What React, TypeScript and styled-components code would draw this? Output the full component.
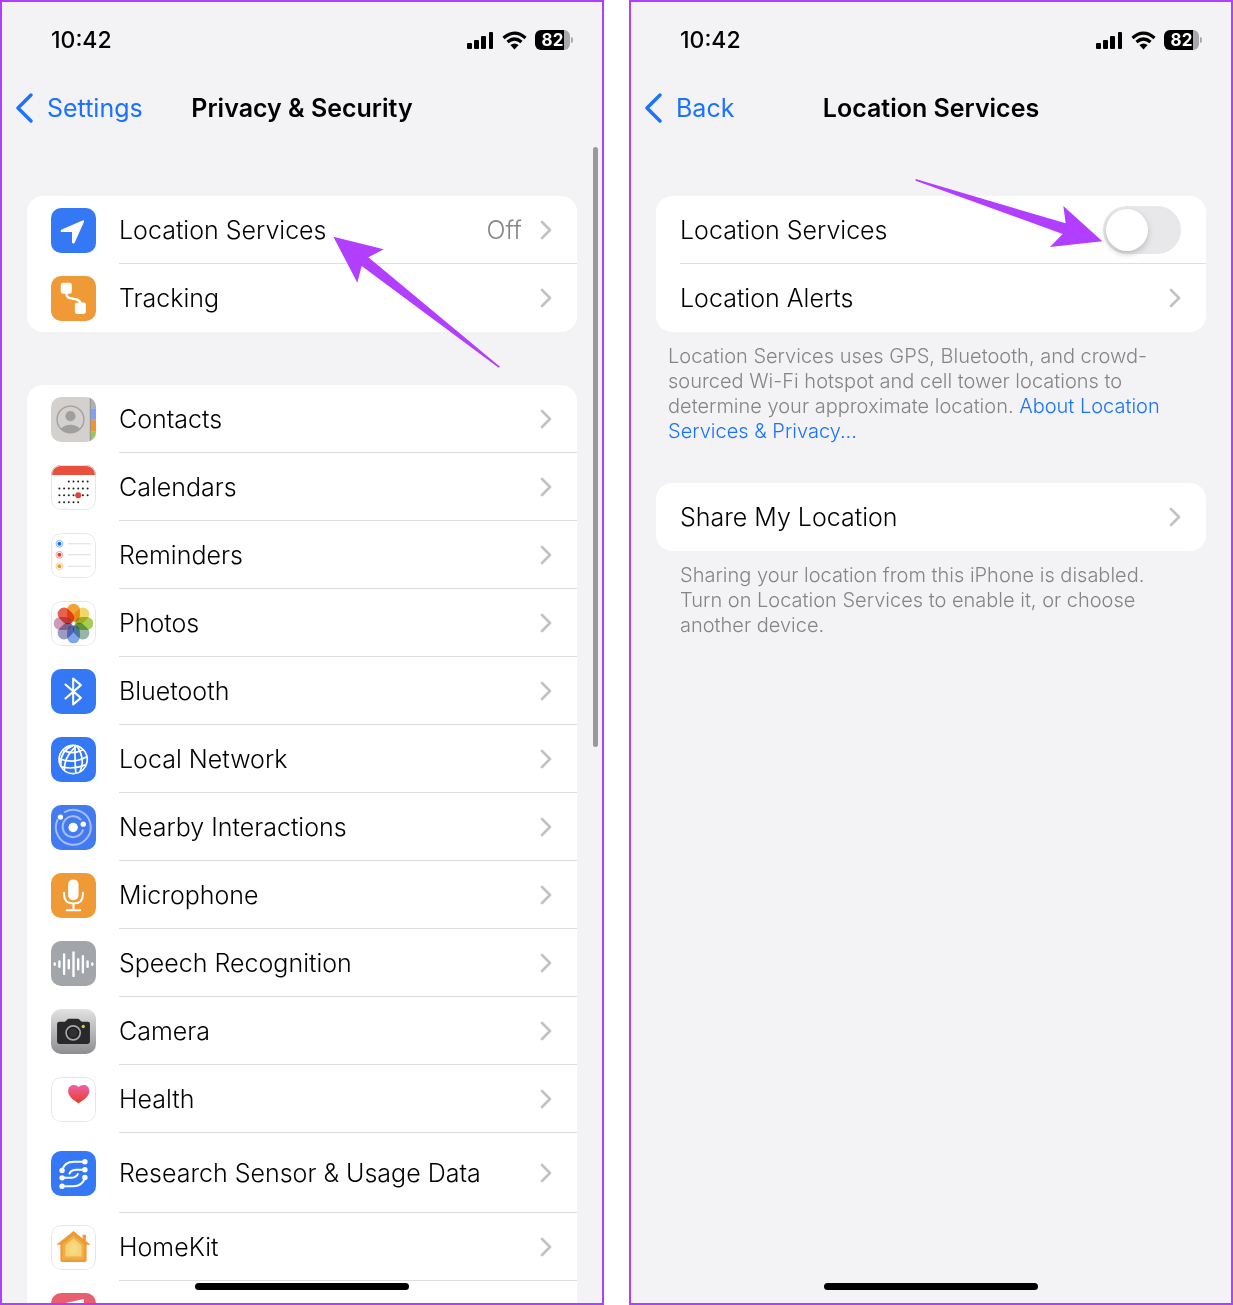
import React, { useState } from "react";
import styled, { createGlobalStyle } from "styled-components";

const GlobalStyle = createGlobalStyle`
  *, *::before, *::after { box-sizing: border-box; }
  body {
    margin: 0;
    background: #fff;
    color: #000;
    font-family: Inter, "Liberation Sans", sans-serif;
  }
  button { font: inherit; color: inherit; background: none; border: 0; padding: 0; text-align: left; cursor: pointer; }
`;

const Page = styled.main`
  display: grid;
  grid-template-columns: 1fr 1fr;
  gap: 25px;
  height: 100vh;
`;

const Phone = styled.section`
  position: relative;
  overflow: hidden;
  border: 2px solid #b23fff;
  background: #f3f3f5;
`;

const StatusBar = styled.div`
  display: flex;
  align-items: center;
  justify-content: space-between;
  height: 76px;
  padding: 0 29px 0 49px;
`;

const Time = styled.time`
  font-size: 23px;
  font-weight: 500;
`;

const StatusIcons = styled.div`
  display: flex;
  align-items: center;
  gap: 8px;
`;

const Battery = styled.span`
  display: flex;
  align-items: center;
  gap: 1px;

  &::after {
    content: "";
    width: 2px;
    height: 6px;
    border-radius: 0 2px 2px 0;
    background: #a9a9ad;
  }
`;

const BatteryLevel = styled.span`
  width: 35px;
  height: 20px;
  border-radius: 6px;
  background: linear-gradient(to right, #000 82%, #a9a9ad 82%);
  color: #fff;
  font-size: 17px;
  font-weight: 700;
  line-height: 20px;
  text-align: center;
`;

const NavBar = styled.header`
  display: grid;
  grid-template-columns: 1fr auto 1fr;
  align-items: center;
  height: 60px;
  padding: 0 12px;
`;

const BackButton = styled.button`
  display: flex;
  align-items: center;
  gap: 13px;
  justify-self: start;
  color: #1a72ff;
  font-size: 25px;
`;

const Title = styled.h1`
  margin: 0;
  font-size: 25px;
  font-weight: 600;
`;

const Content = styled.div`
  padding: 58px 25px 0;
`;

const Card = styled.ul<{ $spaceAbove?: number }>`
  margin: ${(p) => p.$spaceAbove ?? 0}px 0 0;
  padding: 0;
  list-style: none;
  overflow: hidden;
  border-radius: 16px;
  background: #fff;
`;

const RowItem = styled.li`
  &:last-child > * > span:last-child { border-bottom-color: transparent; }
`;

const RowButton = styled.button<{ $tall?: boolean }>`
  display: flex;
  align-items: center;
  gap: 23px;
  width: 100%;
  height: ${(p) => (p.$tall ? 80 : 68)}px;
  padding-left: 24px;
`;

const RowBody = styled.span`
  flex: 1;
  align-self: stretch;
  display: flex;
  align-items: center;
  gap: 18px;
  padding-right: 25px;
  border-bottom: 1px solid #dedee1;
  font-size: 25px;
  font-weight: 350;
`;

const RowLabel = styled.span`
  flex: 1;
  white-space: nowrap;
`;

const RowValue = styled.span`
  color: #858589;
`;

const Switch = styled.input`
  appearance: none;
  width: 78px;
  height: 48px;
  margin: 0;
  padding: 3px;
  border-radius: 24px;
  background: #e8e8ea;
  cursor: pointer;

  &::before {
    content: "";
    display: block;
    width: 42px;
    height: 42px;
    border-radius: 50%;
    background: #fff;
    box-shadow: 0 3px 6px rgba(0, 0, 0, 0.2);
  }
  &:checked { background: #34c759; }
  &:checked::before { margin-left: 30px; }
`;

const Note = styled.p<{ $inset: number }>`
  margin: 12px 24px 0 ${(p) => p.$inset}px;
  color: #858589;
  font-size: 20px;
  font-weight: 350;
  line-height: 25px;

  a { color: #1a72ff; text-decoration: none; }
`;

const ScrollThumb = styled.div`
  position: absolute;
  top: 145px;
  right: 4px;
  width: 5px;
  height: 600px;
  border-radius: 3px;
  background: #99999c;
`;

const HomeIndicator = styled.div`
  position: absolute;
  bottom: 13px;
  left: 50%;
  width: 214px;
  height: 7px;
  margin-left: -107px;
  border-radius: 4px;
  background: #000;
`;

const LeftArrow = styled.svg`
  position: absolute;
  top: 234px;
  left: 330px;
  pointer-events: none;
`;

const RightArrow = styled.svg`
  position: absolute;
  top: 176px;
  right: 128px;
  pointer-events: none;
`;

const IconSvg = styled.svg`
  flex: none;
  display: block;
  border-radius: 10px;
`;

const Tile = ({ fill, outlined, children }: { fill: string; outlined?: boolean; children?: React.ReactNode }) => (
  <IconSvg width="45" height="45" viewBox="0 0 134 134" aria-hidden="true">
    <rect width="134" height="134" fill={fill} />
    {children}
    {outlined && <rect x="1.5" y="1.5" width="131" height="131" rx="28" fill="none" stroke="#e6e6e8" strokeWidth="3" />}
  </IconSvg>
);

const BLUE = "#3478f6";
const ORANGE = "#f09a37";

const LocationIcon = () => (
  <Tile fill={BLUE}>
    <path d="M96 38 L31 66 Q29 69 32 70 H62 Q64 70 64 72 V102 Q66 106 69 103 L97 40 Z" fill="#fff" stroke="#fff" strokeWidth="3" strokeLinejoin="round" />
  </Tile>
);

const TrackingIcon = () => (
  <Tile fill={ORANGE}>
    <rect x="29" y="20" width="33" height="33" rx="7" fill="#fff" />
    <rect x="71" y="79" width="33" height="34" rx="7" fill="#fff" />
    <path d="M45 52 C47 68 58 65 68 68 Q86 70 88 81" fill="none" stroke="#fff" strokeWidth="7" />
  </Tile>
);

const ContactsIcon = () => (
  <Tile fill="#d3d0ce">
    <clipPath id="contact-ring"><circle cx="58" cy="67" r="40" /></clipPath>
    <circle cx="58" cy="57" r="15" fill="#a09fa0" />
    <ellipse cx="58" cy="101" rx="31" ry="18" fill="#a09fa0" clipPath="url(#contact-ring)" />
    <circle cx="58" cy="67" r="40" fill="none" stroke="#a09fa0" strokeWidth="4" />
    <rect x="118" y="0" width="16" height="33" fill="#b1afae" />
    <rect x="118" y="34" width="16" height="34" fill="#7aa3f7" />
    <rect x="118" y="69" width="16" height="34" fill="#f0952c" />
    <rect x="118" y="104" width="16" height="30" fill="#9bc65a" />
    <path d="M117 0 V134" stroke="#8e8c8b" strokeWidth="3" />
  </Tile>
);

const CalendarIcon = () => {
  const columns = [25, 39, 53, 67, 81, 95, 109];
  const weeks = [
    { y: 49, from: 2, to: 6 },
    { y: 70, from: 0, to: 6 },
    { y: 90, from: 0, to: 6 },
    { y: 111, from: 0, to: 4 },
  ];
  return (
    <Tile fill="#fff" outlined>
      {weeks.map((w) =>
        columns.slice(w.from, w.to + 1).map((x) => <circle key={`${x}-${w.y}`} cx={x} cy={w.y} r="3" fill="#222" />)
      )}
      <circle cx="81" cy="90" r="9" fill="#ea3d33" />
      <path d="M0 0 H134 V30 H0 Z" fill="#e94f3c" />
    </Tile>
  );
};

const RemindersIcon = () => (
  <Tile fill="#fff" outlined>
    {[["#1a6dff", 32], ["#ee3b30", 65], ["#f49a1c", 99]].map(([color, y]) => (
      <g key={color}>
        <circle cx="25" cy={y} r="10" fill="none" stroke={color as string} strokeWidth="2" opacity="0.7" />
        <circle cx="25" cy={y} r="6" fill={color as string} />
        <path d={`M50 ${y} H118`} stroke="#dcdcde" strokeWidth="3" />
      </g>
    ))}
  </Tile>
);

const Petal = styled.rect`
  mix-blend-mode: multiply;
`;

const PhotosIcon = () => {
  const petals = ["#f3a233", "#f2d768", "#a6cd55", "#94b8a4", "#7fa5ee", "#9c9cc0", "#cf9ab8", "#ec6050"];
  return (
    <Tile fill="#fff" outlined>
      {petals.map((color, i) => (
        <Petal key={color} x="48" y="8" width="38" height="54" rx="19" fill={color} transform={`rotate(${i * 45} 67 67)`} />
      ))}
    </Tile>
  );
};

const BluetoothIcon = () => (
  <Tile fill={BLUE}>
    <path d="M43 46 L89 86 L66 106 V28 L89 48 L43 88" fill="none" stroke="#fff" strokeWidth="6" strokeLinecap="round" strokeLinejoin="round" />
  </Tile>
);

const NetworkIcon = () => (
  <Tile fill={BLUE}>
    <g fill="none" stroke="#fff" strokeWidth="5">
      <circle cx="66" cy="67" r="42" />
      <path d="M77 26 Q38 58 40 99" />
      <path d="M66 25 Q24 42 30 89" />
      <path d="M72 25 Q70 60 74 108" />
      <path d="M77 26 Q104 68 86 104" />
      <path d="M35 39 Q62 54 96 38" />
      <path d="M24 64 Q64 82 107 59" />
      <path d="M31 89 Q66 98 103 83" />
    </g>
  </Tile>
);

const NearbyIcon = () => (
  <Tile fill="#437af0">
    <g fill="none" stroke="#a4bff8" strokeWidth="6" strokeLinecap="round">
      <path d="M41 21 A52 52 0 1 1 19 45" />
      <path d="M95 75 A31 31 0 1 1 88 43" />
    </g>
    <circle cx="66" cy="67" r="14" fill="#fff" />
    <circle cx="28" cy="36" r="8" fill="#fff" />
    <circle cx="96" cy="57" r="8" fill="#fff" />
  </Tile>
);

const MicrophoneIcon = () => (
  <Tile fill={ORANGE}>
    <rect x="51" y="19" width="31" height="62" rx="15" fill="#fff" />
    <path d="M39 59 V64 Q39 91 67 91 Q95 91 95 64 V59 M67 91 V110 M47 111 H87" fill="none" stroke="#fff" strokeWidth="6" strokeLinecap="round" />
  </Tile>
);

const SpeechIcon = () => (
  <Tile fill="#a2a6aa">
    {[2, 8, 29, 12, 35, 15, 24, 8, 2].map((half, i) => (
      <path key={i} d={`M${11 + i * 14} ${69 - half} V${69 + half}`} stroke="#fff" strokeWidth="7" strokeLinecap="round" />
    ))}
  </Tile>
);

const CameraIcon = () => (
  <Tile fill="url(#camera-shell)">
    <linearGradient id="camera-shell" x1="0" y1="0" x2="0" y2="1">
      <stop offset="0" stopColor="#e2e2e2" />
      <stop offset="1" stopColor="#8e8e92" />
    </linearGradient>
    <path d="M25 38 H40 Q44 38 47 33 Q50 29 55 29 H78 Q83 29 86 33 Q89 38 93 38 H110 Q116 38 116 44 V97 Q116 104 109 104 H25 Q18 104 18 97 V45 Q18 38 25 38Z" fill="#29292b" />
    <circle cx="66" cy="71" r="21" fill="#1c1c1e" stroke="#a9a9ab" strokeWidth="5" />
    <circle cx="66" cy="71" r="14" fill="#303033" />
    <circle cx="96" cy="52" r="5" fill="#f3b73c" />
  </Tile>
);

const HealthIcon = () => (
  <Tile fill="#fff" outlined>
    <linearGradient id="heart" x1="0" y1="0" x2="0" y2="1">
      <stop offset="0" stopColor="#eb63ab" />
      <stop offset="1" stopColor="#ec3b24" />
    </linearGradient>
    <path d="M82 30 C75 20 51 20 51 42 C51 60 70 71 82 78 C94 71 114 60 114 42 C114 20 90 20 82 30Z" fill="url(#heart)" />
  </Tile>
);

const ResearchIcon = () => (
  <Tile fill={BLUE}>
    <g fill="none" stroke="#fff" strokeWidth="6" strokeLinecap="round">
      <path d="M33 58 Q40 32 68 32 H101" />
      <path d="M101 56 H76 Q61 56 55 67" />
      <path d="M33 80 H58 Q75 80 80 69" />
      <path d="M33 105 H66 Q94 105 101 79" />
    </g>
    {[[101, 32], [33, 58], [101, 56], [33, 80], [101, 79], [33, 105]].map(([x, y]) => (
      <circle key={`${x}-${y}`} cx={x} cy={y} r="8" fill="#fff" />
    ))}
  </Tile>
);

const HomeKitIcon = () => (
  <Tile fill="#fff" outlined>
    <path d="M67 18 L94 40 V29 H104 V48 L118 59 H106 V106 Q106 110 102 110 H32 Q28 110 28 106 V59 H16 Z" fill="#f09a37" />
    <path d="M67 31 L99 57 V103 H35 V57 Z" fill="#f1ad48" />
    <path d="M67 40 L91 60 V94 H43 V60 Z" fill="#f6d474" />
    <path d="M67 54 L78 64 V84 H56 V64 Z" fill="#f7da86" />
  </Tile>
);

const MediaIcon = () => (
  <Tile fill="#e8606f">
    <path d="M46 29 L98 18 V92 H88 V42 L56 49 V100 H46 Z" fill="#fff" />
  </Tile>
);

const Chevron = () => (
  <svg width="12" height="20" viewBox="0 0 12 20" aria-hidden="true">
    <path d="M2 2 L10 10 L2 18" fill="none" stroke="#c2c2c5" strokeWidth="2.6" strokeLinecap="round" strokeLinejoin="round" />
  </svg>
);

const BackChevron = () => (
  <svg width="20" height="30" viewBox="0 0 20 30" aria-hidden="true">
    <path d="M17 2 L4 15 L17 28" fill="none" stroke="#1a72ff" strokeWidth="3.4" strokeLinecap="round" strokeLinejoin="round" />
  </svg>
);

const SignalIcon = () => (
  <svg width="27" height="18" viewBox="0 0 27 18" aria-hidden="true">
    <rect x="0" y="12" width="5" height="6" rx="1" />
    <rect x="7" y="9" width="5" height="9" rx="1" />
    <rect x="14" y="5" width="5" height="13" rx="1" />
    <rect x="22" y="1" width="4" height="17" rx="1" />
  </svg>
);

const WifiIcon = () => (
  <svg width="25" height="19" viewBox="0 0 25 19" aria-hidden="true">
    <path d="M1.5 7 Q12.5 -2.8 23.5 7 M5.5 11 Q12.5 5 19.5 11" fill="none" stroke="#000" strokeWidth="3.2" />
    <path d="M8.4 14 Q12.5 10.8 16.6 14 L12.5 18.5 Z" />
  </svg>
);

const permissions = [
  { label: "Contacts", Icon: ContactsIcon },
  { label: "Calendars", Icon: CalendarIcon },
  { label: "Reminders", Icon: RemindersIcon },
  { label: "Photos", Icon: PhotosIcon },
  { label: "Bluetooth", Icon: BluetoothIcon },
  { label: "Local Network", Icon: NetworkIcon },
  { label: "Nearby Interactions", Icon: NearbyIcon },
  { label: "Microphone", Icon: MicrophoneIcon },
  { label: "Speech Recognition", Icon: SpeechIcon },
  { label: "Camera", Icon: CameraIcon },
  { label: "Health", Icon: HealthIcon },
  { label: "Research Sensor & Usage Data", Icon: ResearchIcon, tall: true },
  { label: "HomeKit", Icon: HomeKitIcon },
  { label: "", Icon: MediaIcon },
];

interface RowProps {
  label: string;
  value?: string;
  tall?: boolean;
  Icon?: React.ComponentType;
}

const Row = ({ label, value, tall, Icon }: RowProps) => (
  <RowItem>
    <RowButton type="button" $tall={tall}>
      {Icon && <Icon />}
      <RowBody>
        <RowLabel>{label}</RowLabel>
        {value && <RowValue>{value}</RowValue>}
        <Chevron />
      </RowBody>
    </RowButton>
  </RowItem>
);

const PhoneTop = ({ back, title }: { back: string; title: string }) => (
  <>
    <StatusBar>
      <Time>10:42</Time>
      <StatusIcons>
        <SignalIcon />
        <WifiIcon />
        <Battery><BatteryLevel>82</BatteryLevel></Battery>
      </StatusIcons>
    </StatusBar>
    <NavBar>
      <BackButton type="button"><BackChevron />{back}</BackButton>
      <Title>{title}</Title>
    </NavBar>
  </>
);

const SwitchRow = styled(RowButton).attrs({ as: "label" })``;

export default function App() {
  const [enabled, setEnabled] = useState(false);
  return (
    <>
      <GlobalStyle />
      <Page>
        <Phone>
          <PhoneTop back="Settings" title="Privacy & Security" />
          <Content>
            <Card>
              <Row label="Location Services" value="Off" Icon={LocationIcon} />
              <Row label="Tracking" Icon={TrackingIcon} />
            </Card>
            <Card $spaceAbove={53}>
              {permissions.map((p) => <Row key={p.label} {...p} />)}
            </Card>
          </Content>
          <ScrollThumb />
          <HomeIndicator />
          <LeftArrow width="170" height="133" viewBox="0 0 510 399" aria-hidden="true">
            <path d="M4 2 L155 40 L109 64 L504 392 L500 395 L89 90 L76 140 Z" fill="#b23fff" />
          </LeftArrow>
        </Phone>
        <Phone>
          <PhoneTop back="Back" title="Location Services" />
          <Content>
            <Card>
              <RowItem>
                <SwitchRow>
                  <RowBody>
                    <RowLabel>Location Services</RowLabel>
                    <Switch type="checkbox" checked={enabled} onChange={(e) => setEnabled(e.target.checked)} />
                  </RowBody>
                </SwitchRow>
              </RowItem>
              <Row label="Location Alerts" />
            </Card>
            <Note $inset={12}>
              Location Services uses GPS, Bluetooth, and crowd-sourced Wi-Fi hotspot and cell tower locations to
              determine your approximate location. <a href="#about">About Location Services &amp; Privacy...</a>
            </Note>
            <Card $spaceAbove={39}>
              <Row label="Share My Location" />
            </Card>
            <Note $inset={24}>
              Sharing your location from this iPhone is disabled. Turn on Location Services to enable it, or choose
              another device.
            </Note>
          </Content>
          <HomeIndicator />
          <RightArrow width="188" height="70" viewBox="0 0 564 210" aria-hidden="true">
            <path d="M2 3 L452 136 L445 84 L562 190 L405 207 L443 168 L2 8 Z" fill="#b23fff" />
          </RightArrow>
        </Phone>
      </Page>
    </>
  );
}
